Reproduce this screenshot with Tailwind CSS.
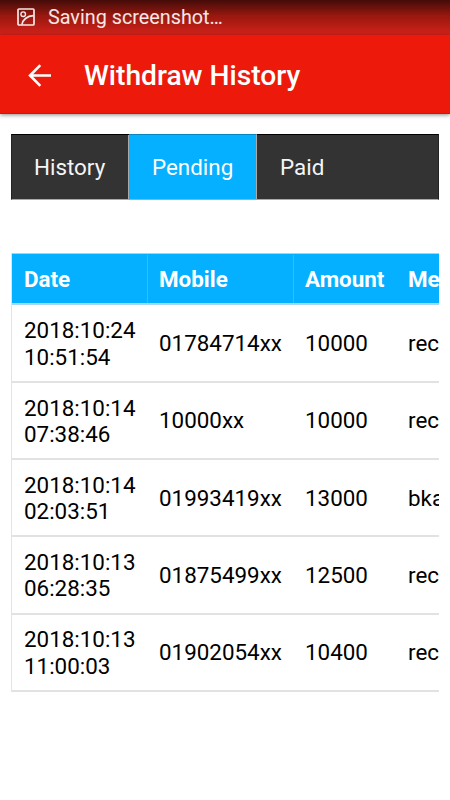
<!DOCTYPE html>
<html lang="en">
<head>
<meta charset="utf-8">
<title>Withdraw History</title>
<script src="https://cdn.jsdelivr.net/npm/@tailwindcss/browser@4"></script>
</head>
<body class="w-[450px] h-[800px] overflow-hidden bg-white font-[Roboto,sans-serif] text-black">
<div class="h-[35px] bg-linear-to-b from-[#450b08] via-[#98180f] via-45% to-[#d3221a] flex items-center pl-[17px] text-white/90">
  <svg class="w-[18px] h-[18px] shrink-0 -mt-px" viewBox="0 0 18 18" fill="none" stroke="currentColor" stroke-width="1.7"><rect x="1" y="1" width="16" height="16" rx="1"/><circle cx="6.2" cy="6.2" r="2.3" stroke-width="1.4"/><path d="M5 16.5C5.5 12 10 8 16.5 7.7"/></svg>
  <span class="ml-[13px] text-[19.8px] leading-[34px] whitespace-nowrap">Saving screenshot…</span>
</div>
<header class="h-[79px] bg-[#ed1a0b] border-b border-[#cf1609] flex items-center pl-[28px] text-white shadow-[0_1px_4px_rgba(0,0,0,0.45)]">
  <svg class="w-[23px] h-[23px] shrink-0 mt-[2px]" viewBox="0 0 23 23" fill="none" stroke="currentColor" stroke-width="2.6"><path d="M23 11.5H2.2M12.3 1.2L2 11.5l10.3 10.3"/></svg>
  <h1 class="ml-[33px] mt-[3px] text-[28.2px] leading-[40px] font-medium whitespace-nowrap">Withdraw History</h1>
</header>
<nav class="mt-[20px] ml-[11px] w-[428px] h-[66px] bg-[#333333] border border-t-black border-x-[#222222] border-b-[#aaaaaa] flex text-[22.4px] leading-[64px] text-[#f5f5f5]">
  <a class="w-[117px] pl-[22px] border-r border-[#aaaaaa]">History</a>
  <a class="w-[128px] pl-[23px] -mt-px h-[65px] bg-[#04b0ff] border-t border-t-[#0687c2] border-r border-r-[#aaaaaa] text-white">Pending</a>
  <a class="pl-[23px]">Paid</a>
</nav>
<div class="mt-[53px] ml-[11px] w-[428px] overflow-hidden border-l border-[#e4e4e4] text-[22.4px] leading-[26.5px]">
  <div class="w-[560px]">
    <div class="grid grid-cols-[136px_146px_103px_1fr] h-[52px] bg-[#04b0ff] border-t border-b-2 border-t-[#9bd8f5] border-b-[#a9d8ed] font-bold text-white leading-[49px] pt-px">
      <div class="pl-[12px] border-r border-[#31beff] h-[48px]">Date</div><div class="pl-[11px] border-r border-[#31beff] h-[48px]">Mobile</div><div class="pl-[11px]">Amount</div><div class="pl-[11px]">Method</div>
    </div>
    <div class="grid grid-cols-[136px_146px_103px_1fr] items-center h-[78px] border-b-2 border-[#e2e2e2]">
      <div class="pl-[12px] pt-[1.4px]">2018:10:24<br>10:51:54</div><div class="pl-[11px]">01784714xx</div><div class="pl-[11px]">10000</div><div class="pl-[11px]">recharge</div>
    </div>
    <div class="grid grid-cols-[136px_146px_103px_1fr] items-center h-[77.2px] border-b-2 border-[#e2e2e2]">
      <div class="pl-[12px] pt-px">2018:10:14<br>07:38:46</div><div class="pl-[11px]">10000xx</div><div class="pl-[11px]">10000</div><div class="pl-[11px]">recharge</div>
    </div>
    <div class="grid grid-cols-[136px_146px_103px_1fr] items-center h-[77.2px] border-b-2 border-[#e2e2e2]">
      <div class="pl-[12px] pt-px">2018:10:14<br>02:03:51</div><div class="pl-[11px]">01993419xx</div><div class="pl-[11px]">13000</div><div class="pl-[11px]">bkash</div>
    </div>
    <div class="grid grid-cols-[136px_146px_103px_1fr] items-center h-[77.2px] border-b-2 border-[#e2e2e2]">
      <div class="pl-[12px] pt-px">2018:10:13<br>06:28:35</div><div class="pl-[11px]">01875499xx</div><div class="pl-[11px]">12500</div><div class="pl-[11px]">recharge</div>
    </div>
    <div class="grid grid-cols-[136px_146px_103px_1fr] items-center h-[77.2px] border-b-2 border-[#e2e2e2]">
      <div class="pl-[12px] pt-px">2018:10:13<br>11:00:03</div><div class="pl-[11px]">01902054xx</div><div class="pl-[11px]">10400</div><div class="pl-[11px]">recharge</div>
    </div>
  </div>
</div>
</body>
</html>
